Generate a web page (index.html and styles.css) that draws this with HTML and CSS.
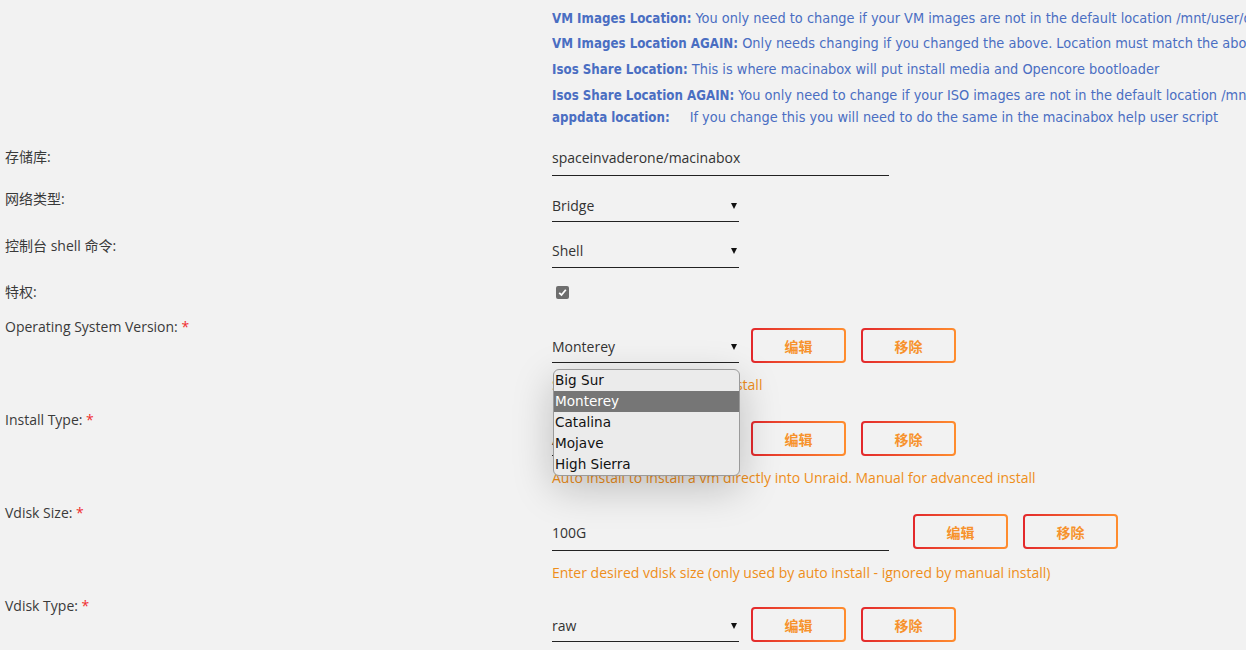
FILE: index.html
```html
<!DOCTYPE html>
<html>

<head>
    <meta charset="utf-8">
    <link rel="stylesheet" href="styles.css">
</head>

<body>
    <div class="page">
        <div class="setting helpRow">
            <div class="label"></div>
            <div class="help">
                <p class="helpLine clipped"><b>Macinabox Type:</b> Only change this if you know the type of install you want, typically leave this alone for a guaranteed default</p>
                <p class="helpLine"><b>VM Images Location:</b> You only need to change if your VM images are not in the default location /mnt/user/domains</p>
                <p class="helpLine"><b>VM Images Location AGAIN:</b> Only needs changing if you changed the above. Location must match the above</p>
                <p class="helpLine"><b>Isos Share Location:</b> This is where macinabox will put install media and Opencore bootloader</p>
                <p class="helpLine"><b>Isos Share Location AGAIN:</b> You only need to change if your ISO images are not in the default location /mnt/user/isos</p>
                <p class="helpLine last"><b>appdata location:</b><span class="tab">If you change this you will need to do the same in the macinabox help user script</span></p>
            </div>
        </div>

        <div class="setting rowRepo">
            <div class="label">存储库:</div>
            <div class="value">
                <div class="textbox wide">spaceinvaderone/macinabox</div>
            </div>
        </div>

        <div class="setting rowNet">
            <div class="label">网络类型:</div>
            <div class="value">
                <div class="select selNet">Bridge<span class="caret"></span></div>
            </div>
        </div>

        <div class="setting rowShell">
            <div class="label">控制台 shell 命令:</div>
            <div class="value">
                <div class="select selShell">Shell<span class="caret"></span></div>
            </div>
        </div>

        <div class="setting rowPriv">
            <div class="label">特权:</div>
            <div class="value">
                <span class="checkbox">
                    <svg width="9" height="9" viewBox="0 0 9 9"><path d="M1.2 4.8 L3.5 7 L7.8 1.8" fill="none" stroke="#fff" stroke-width="1.8"/></svg>
                </span>
            </div>
        </div>

        <div class="setting rowField">
            <div class="label">Operating System Version: <span class="req">*</span></div>
            <div class="value">
                <div class="controls">
                    <div class="select selField open">Monterey<span class="caret"></span>
                        <ul class="dropdown">
                            <li>Big Sur</li>
                            <li class="chosen">Monterey</li>
                            <li>Catalina</li>
                            <li>Mojave</li>
                            <li>High Sierra</li>
                        </ul>
                    </div>
                    <button class="button" type="button">编辑</button>
                    <button class="button" type="button">移除</button>
                </div>
                <p class="hint">Select a macOS version to install</p>
            </div>
        </div>

        <div class="setting rowField">
            <div class="label">Install Type: <span class="req">*</span></div>
            <div class="value">
                <div class="controls">
                    <div class="select selField">Auto install<span class="caret"></span></div>
                    <button class="button" type="button">编辑</button>
                    <button class="button" type="button">移除</button>
                </div>
                <p class="hint">Auto install to install a vm directly into Unraid. Manual for advanced install</p>
            </div>
        </div>

        <div class="setting rowField">
            <div class="label">Vdisk Size: <span class="req">*</span></div>
            <div class="value">
                <div class="controls">
                    <div class="textbox wide fieldBox">100G</div>
                    <button class="button afterWide" type="button">编辑</button>
                    <button class="button" type="button">移除</button>
                </div>
                <p class="hint">Enter desired vdisk size (only used by auto install - ignored by manual install)</p>
            </div>
        </div>

        <div class="setting rowField">
            <div class="label">Vdisk Type: <span class="req">*</span></div>
            <div class="value">
                <div class="controls">
                    <div class="select selField">raw<span class="caret"></span></div>
                    <button class="button" type="button">编辑</button>
                    <button class="button" type="button">移除</button>
                </div>
            </div>
        </div>
    </div>
</body>

</html>
```

FILE: styles.css
```css
html,
body {
    margin: 0;
    padding: 0;
    background: #f2f2f2;
    height: 650px;
    overflow: hidden;
}

body {
    font-family: "Open Sans", "Noto Sans CJK SC", sans-serif;
    font-size: 14px;
    color: #333;
}

.page {
    margin-top: -20px;
}

.setting {
    display: grid;
    grid-template-columns: 552px 1fr;
}

.label {
    padding-left: 5px;
    line-height: 20px;
    color: #3a3a3a;
}

.req {
    color: #f02e2e;
}

/* blue help block */
.help {
    font-family: "DejaVu Sans Condensed", "DejaVu Sans", sans-serif;
    font-size: 14.4px;
    color: #4a6ec2;
    white-space: nowrap;
    overflow: hidden;
}

.help b {
    font-size: 13.2px;
}

.helpLine {
    margin: 0;
    line-height: 25.7px;
}

.helpLine.clipped {
    margin-top: -4px;
    margin-bottom: 4px;
}

.helpLine.last {
    line-height: 16.7px;
}

.tab {
    margin-left: 20px;
}

.helpRow {
    margin-bottom: 21px;
}

/* inputs */
.textbox,
.select {
    line-height: 20px;
    border-bottom: 1px solid #222;
    color: #333;
    box-sizing: border-box;
}

.textbox.wide {
    width: 337px;
    padding: 1px 0 7px;
}

.select {
    position: relative;
    width: 187px;
    padding-bottom: 5px;
}

.caret {
    position: absolute;
    right: 2px;
    top: 7px;
    border-left: 3px solid transparent;
    border-right: 3px solid transparent;
    border-top: 6px solid #111;
}

.rowRepo {
    height: 42px;
}

.rowNet {
    height: 47px;
}

.selNet {
    margin-top: 7px;
}

.rowShell {
    height: 46px;
}

.selShell {
    margin-top: 5px;
    padding-bottom: 6px;
}

.rowPriv {
    height: 35px;
}

.checkbox {
    display: flex;
    align-items: center;
    justify-content: center;
    width: 13px;
    height: 13px;
    margin: 4px 0 0 4px;
    background: #6e6e6e;
    border-radius: 2px;
}

/* rows with buttons */
.rowField {
    height: 93px;
}

.controls {
    display: flex;
    align-items: flex-start;
    margin-top: 11px;
}

.selField {
    margin-top: 9px;
}

.fieldBox {
    margin-top: 8px;
    padding: 0 0 5px;
}

.button {
    width: 95px;
    height: 35px;
    margin-left: 15px;
    border: 2px solid transparent;
    border-radius: 4px;
    background: linear-gradient(#f2f2f2, #f2f2f2) padding-box, linear-gradient(90deg, #e3282c, #ff8d2e) border-box;
    color: #f7922d;
    font-family: "Noto Sans CJK SC", sans-serif;
    font-weight: bold;
    font-size: 14px;
    padding: 0;
    cursor: pointer;
}

.controls .select + .button {
    margin-left: 12px;
}

.button.afterWide {
    margin-left: 24px;
}

.hint {
    margin: 12px 0 0;
    line-height: 20px;
    color: #ee8e1a;
    white-space: nowrap;
}

/* open select list */
.dropdown {
    position: absolute;
    left: 1px;
    top: 32px;
    width: 185px;
    margin: 0;
    padding: 0;
    list-style: none;
    background: #ebebeb;
    border: 1px solid #9a9a9a;
    border-radius: 6px;
    box-shadow: 0 12px 40px rgba(0, 0, 0, 0.22);
    font-family: "DejaVu Sans", sans-serif;
    font-size: 13.6px;
    color: #111;
    overflow: hidden;
    z-index: 5;
}

.dropdown li {
    height: 21px;
    line-height: 21px;
    padding-left: 1px;
}

.dropdown li.chosen {
    background: #767676;
    color: #fff;
}
```
